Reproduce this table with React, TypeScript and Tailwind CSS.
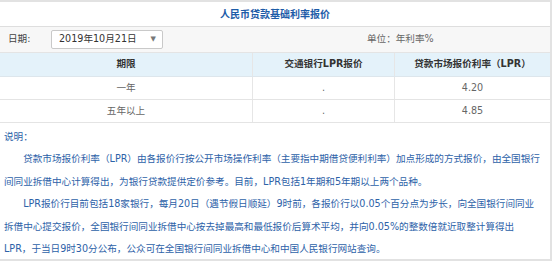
import React from 'react';

const rows = [
  { term: '一年', bank: '.', lpr: '4.20' },
  { term: '五年以上', bank: '.', lpr: '4.85' },
];

export default function App() {
  return (
    <div className="w-[553px] h-[263px] bg-white overflow-hidden font-['DejaVu_Sans','Noto_Sans_CJK_SC',sans-serif] text-[9.6px]">
      <div className="w-[552px] h-[261px] border-t-2 border-r-2 border-b-2 border-[#e2e2e2]">
        <div className="h-[25px] flex items-center justify-center border-b border-[#dedede] text-[#1d5ca8] font-bold text-[10px]">
          人民币贷款基础利率报价
        </div>

        <div className="h-[26px] flex items-center bg-[#f7f7f7] border-b border-[#e4e4e4] text-[#444]">
          <span className="ml-[8px] w-[43px]">日期:</span>
          <div className="w-[112px] h-[19px] bg-white border border-[#c9c9c9] rounded-[2px] flex items-center justify-between pl-[7px] pr-[6px] text-[#333]">
            <span>2019年10月21日</span>
            <span className="text-[7px] text-[#777]">▼</span>
          </div>
          <span className="ml-[204px] text-[#666]">单位：年利率%</span>
        </div>

        <div className="grid grid-cols-[253px_142px_155px] h-[24px] bg-[#e4f2fa] border-b border-[#dde6ec] font-bold text-[#333]">
          <div className="flex items-center justify-center border-r border-[#e6e6e6]">期限</div>
          <div className="flex items-center justify-center border-r border-[#e6e6e6]">交通银行LPR报价</div>
          <div className="flex items-center justify-center">贷款市场报价利率（LPR）</div>
        </div>

        {rows.map((r) => (
          <div key={r.term} className="grid grid-cols-[253px_142px_155px] h-[23px] border-b border-[#e4e4e4] text-[#666]">
            <div className="flex items-center justify-center border-r border-[#e6e6e6]">{r.term}</div>
            <div className="flex items-center justify-center border-r border-[#e6e6e6]">{r.bank}</div>
            <div className="flex items-center justify-center">{r.lpr}</div>
          </div>
        ))}

        <div className="pt-[3px] pl-[4px] pr-[2px] text-[#2d62a8] leading-[22.4px]">
          <p>说明：</p>
          <p className="indent-[2em]">
            贷款市场报价利率（LPR）由各报价行按公开市场操作利率（主要指中期借贷便利利率）加点形成的方式报价，由全国银行<br />
            间同业拆借中心计算得出，为银行贷款提供定价参考。目前，LPR包括1年期和5年期以上两个品种。
          </p>
          <p className="indent-[2em]">
            LPR报价行目前包括18家银行，每月20日（遇节假日顺延）9时前，各报价行以0.05个百分点为步长，向全国银行间同业<br />
            拆借中心提交报价，全国银行间同业拆借中心按去掉最高和最低报价后算术平均，并向0.05%的整数倍就近取整计算得出<br />
            LPR，于当日9时30分公布，公众可在全国银行间同业拆借中心和中国人民银行网站查询。
          </p>
        </div>
      </div>
    </div>
  );
}
